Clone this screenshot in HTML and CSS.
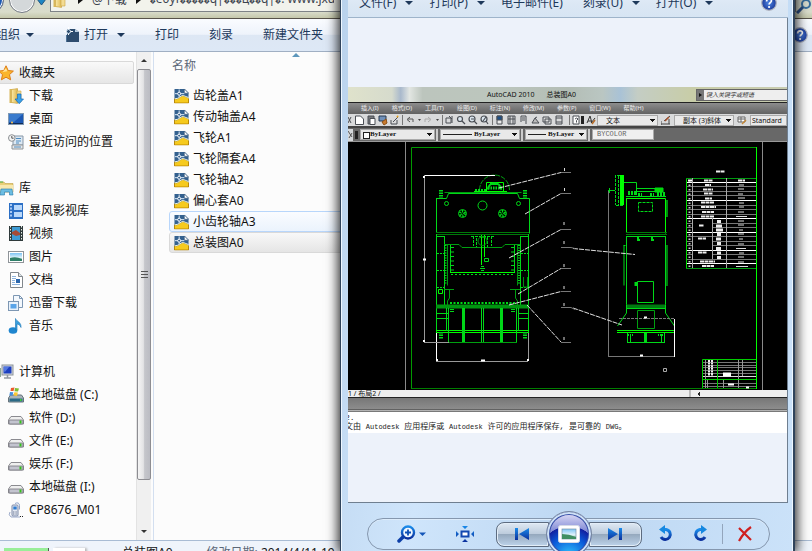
FILE: index.html
```html
<!DOCTYPE html>
<html lang="zh-CN">
<head>
<meta charset="utf-8">
<title>总装图A0</title>
<link rel="stylesheet" href="styles.css">
</head>
<body>
<svg class="defs" aria-hidden="true">
  <defs>
    <linearGradient id="blue" x1="0" y1="0" x2="0" y2="1"><stop offset="0" stop-color="#1a8bea"/><stop offset="1" stop-color="#0b2f9c"/></linearGradient>
    <linearGradient id="gold" x1="0" y1="0" x2="1" y2="0"><stop offset="0" stop-color="#fbeaa8"/><stop offset="1" stop-color="#dcb650"/></linearGradient>
    <linearGradient id="sky" x1="0" y1="0" x2="0" y2="1"><stop offset="0" stop-color="#7cc4f4"/><stop offset=".6" stop-color="#e4f4fb"/><stop offset="1" stop-color="#2f8f62"/></linearGradient>
    <radialGradient id="help"><stop offset="0" stop-color="#4f86e4"/><stop offset="1" stop-color="#1b3a9a"/></radialGradient>
  </defs>
  <symbol id="i-dwg" viewBox="0 0 16 16">
    <path d="M.5.5h11l4 4v11H.5z" fill="#34618f"/><path d="M1 11.500c5 0 6-4 9-3.500 2 .5 3 1.500 5.500 2v5.500H1z" fill="#f6ca1e"/><path d="M1 11c5 0 6-4 9-3.500 2 .5 3 1.500 5.500 2" stroke="#fffbe0" fill="none"/><path d="M11 .5l4.500 4.500H11z" fill="#fff" stroke="#2c4d70" stroke-width=".6"/>
    <path d="M5.500 1v8M1 5.500h10" stroke="#e4f2ff" fill="none"/><circle cx="5.500" cy="5.500" r="1.600" fill="#34618f" stroke="#fff"/><path d="M.5 11v4.500h15V11" fill="none" stroke="#b98400"/>
  </symbol>
  <symbol id="i-drive" viewBox="0 0 16 16">
    <path d="M3 6.500h10l2.500 3.500v4h-15v-4z" fill="#efefef" stroke="#8b8b90"/><rect x="1" y="10" width="14" height="4" rx="1" fill="#c3c4cf" stroke="#77777f" stroke-width=".8"/><rect x="11.500" y="10.500" width="2" height="3" fill="#35c21b"/>
  </symbol>
  <symbol id="i-help" viewBox="0 0 16 16">
    <circle cx="8" cy="8" r="7.300" fill="url(#help)" stroke="#b0b4c0" stroke-width="1.200"/><path d="M5.600 6.400c0-3.400 5-3.300 4.800-.4-.1 1.600-2.300 1.700-2.300 3.600" fill="none" stroke="#fff" stroke-width="1.700"/><circle cx="8.100" cy="12" r="1.100" fill="#fff"/>
  </symbol>
  <symbol id="i-folder" viewBox="0 0 16 16">
    <path d="M1.500 1h8v14h-8z" fill="#d8b75a"/><path d="M3.500 1.500l6-1v15l-6-1z" fill="url(#gold)" stroke="#c9a445" stroke-width=".6"/><path d="M9 3h4v11H9z" fill="#f3dc92" stroke="#c9a445" stroke-width=".6"/>
  </symbol>
</svg>

<div class="desktop">
  <div class="explorer">
    <header class="address">
      <button class="nav-orb back" aria-label="后退"></button>
      <button class="nav-orb forward" aria-label="前进"></button>
      <svg class="history" viewBox="0 0 9 6"><path d="M0 0h9L4.500 6z" fill="#1c86c4" stroke="#20567f"/></svg>
      <div class="crumbs">
        <svg class="icon16" viewBox="0 0 16 16"><use href="#i-folder"/></svg>
        <span class="tri-right"></span><a href="#">@下载</a>
        <span class="tri-right"></span><a href="#"><s>�</s>e0yf<s>�����</s>q|<s>���</s>ц<s>��</s>q|<s>�</s>: www.jxdn</a>
      </div>
      <svg class="search" viewBox="0 0 16 16"><circle cx="10" cy="6" r="4" fill="none" stroke="#3a6f9e" stroke-width="2"/><path d="M7 9l-6 6" stroke="#2c4f86" stroke-width="3"/></svg>
    </header>

    <nav class="toolbar" aria-label="命令栏">
      <button class="org">组织<span class="tri-down"></span></button>
      <button class="open"><svg class="icon16" viewBox="0 0 16 16"><path d="M3 2h8l4 3v10H3z" fill="#2d4c6e"/><path d="M11 2v3h4z" fill="#b9cfe4"/><path d="M0 4.500h9M4.500 0v8" stroke="#fff"/><circle cx="4.500" cy="4.500" r="2" fill="#2d4c6e" stroke="#dceaf6"/><path d="M2.500 8v7" stroke="#4e7296"/></svg>打开<span class="tri-down"></span></button>
      <button>打印</button><button>刻录</button><button>新建文件夹</button>
      <svg class="icon16 help" viewBox="0 0 16 16" role="img" aria-label="帮助"><use href="#i-help"/></svg>
    </nav>

    <div class="panes">
      <aside class="tree">
        <a class="head active" href="#"><svg class="icon16" viewBox="0 0 16 16"><path d="M8 .8l2.200 4.700 5.200.6-3.900 3.500 1.100 5.200L8 12.200l-4.600 2.600 1.100-5.200L.6 6.100l5.200-.6z" fill="#fbb52c" stroke="#dd7d16"/><path d="M8 3l1.300 3.300-4.800.7" fill="#ffe49a"/></svg>收藏夹</a>
        <a href="#"><svg class="icon16" viewBox="0 0 16 16"><use href="#i-folder"/><path d="M9.500 6h3.500v5h2.500l-4.300 4.700L7 11h2.500z" fill="#3aa2ea" stroke="#1668b4" stroke-width=".7"/></svg>下载</a>
        <a href="#"><svg class="icon16" viewBox="0 0 16 16"><rect x=".5" y="2.500" width="15" height="11" fill="#1c58b4" stroke="#7f98b3"/><path d="M1 3h14L6 11H1z" fill="#4f93de" opacity=".6"/><path d="M1 12.500h14" stroke="#112c55"/><circle cx="4" cy="11.500" r="1" fill="#ffc04d"/></svg>桌面</a>
        <a href="#"><svg class="icon16" viewBox="0 0 16 16"><path d="M5 2h10v9H5z" fill="#dce8f3" stroke="#8796a6"/><path d="M4 11h11v4H4z" fill="#e8e8e8" stroke="#8f9499"/><path d="M8 4.500h5M8 7h5M8 9h3M6 13h7" stroke="#4f8cc0"/><circle cx="3.800" cy="4" r="3.300" fill="#f5f5f5" stroke="#8b8f93"/><path d="M3.800 2v2.200h1.800" fill="none" stroke="#555"/></svg>最近访问的位置</a>
        <hr>
        <a class="head" href="#"><svg class="icon16" viewBox="0 0 16 16"><path d="M0 2h6l1 1.500h8V12H0z" fill="#e9cf78" stroke="#bf9d42" stroke-width=".6"/><path d="M0 5h15v7H0z" fill="#f7e8ae"/><path d="M1 2h4" stroke="#4ab54b"/><path d="M2 15l1-6h11l1 6h-3.500v-3h-5v3z" fill="#6cbde2" stroke="#2279ad" stroke-width=".6"/></svg>库</a>
        <a href="#"><svg class="icon16" viewBox="0 0 16 16"><rect x="1" width="14" height="16" fill="#2b6fc5"/><path d="M3 1v14" stroke="#d6e8ff" stroke-width="1.500" stroke-dasharray="2 1.500"/><path d="M6 2h8v5H6zM6 9h8v5H6z" fill="#b9d8fa"/></svg>暴风影视库</a>
        <a href="#"><svg class="icon16" viewBox="0 0 16 16"><rect x="1" width="14" height="15" fill="#2f3a3b"/><path d="M2.500 0v15M13.500 0v15" stroke="#e6efe9" stroke-dasharray="1.500 1.500"/><path d="M4 1h8v13H4z" fill="#3e9bd4"/><path d="M4 6l4-2 4 3v2l-4 1-4-2z" fill="#a74b35"/></svg>视频</a>
        <a href="#"><svg class="icon16" viewBox="0 0 16 16"><rect x=".5" y="2.500" width="15" height="11" fill="#fff" stroke="#8f9499"/><rect x="2" y="4" width="12" height="8" fill="url(#sky)"/><path d="M2 9q6-2 12 1v2H2z" fill="#2e7f68"/></svg>图片</a>
        <a href="#"><svg class="icon16" viewBox="0 0 16 16"><path d="M2.500.5h8l4 4v11h-12z" fill="#fff" stroke="#81878c"/><path d="M10.500.5v4h4" fill="#dde3e8" stroke="#81878c"/><path d="M4 4.500h4M4 6.500h4M4 8.500h3M4 10.500h3M4 12.500h8" stroke="#8eb4dd"/><path d="M8 7h4v4H8z" fill="#2a66ad"/></svg>文档</a>
        <a href="#"><svg class="icon16" viewBox="0 0 16 16"><path d="M5.500.5h6l3 3v9h-9z" fill="#f3f8fd" stroke="#7d97b3"/><path d="M11.500.5v3h3" fill="none" stroke="#7d97b3"/><rect x=".5" y="6.500" width="10" height="9" fill="#e9f2fb" stroke="#7d97b3"/><rect x="2.500" y="9" width="6" height="4.500" fill="#5aa4e8"/></svg>迅雷下载</a>
        <a href="#"><svg class="icon16" viewBox="0 0 16 16"><ellipse cx="5" cy="12.500" rx="4.300" ry="3.200" fill="#1f86cf"/><path d="M7.500 12V.5c1 3 6 3.500 5.500 9-1-3-3-3.300-4-3.500v6z" fill="#3ba0dd" stroke="#1673b5" stroke-width=".6"/></svg>音乐</a>
        <hr>
        <a class="head" href="#"><svg class="icon16" viewBox="0 0 16 16"><rect x="4" y="1" width="11" height="10" fill="#d6dade" stroke="#8a9299"/><rect x="5.500" y="2.500" width="8" height="7" fill="#1c3fc0"/><path d="M5.500 2.500h6l-5 6z" fill="#6c93f0" opacity=".7"/><path d="M6 14h7M9.500 11v3" stroke="#9299a0" stroke-width="1.500"/><path d="M0 4h3v9H0z" fill="#8aa894"/></svg>计算机</a>
        <a href="#"><svg class="icon16" viewBox="0 0 16 16"><path d="M2.500 8h11l2 3v4H.5v-4z" fill="#a9b3b9" stroke="#65727b"/><path d="M1.500 11.500h13v3h-13z" fill="#2b6a86"/><path d="M12 12h1.500v2H12z" fill="#3fd22c"/><path d="M3 1l3.500-.5L5.500 4 2.500 4z" fill="#ec5a2c"/><path d="M7 1l4 .5-1 3-3.500-.3z" fill="#7ebd33"/><path d="M2 5l3.300.2L4.500 8.500H1.300z" fill="#4490df"/><path d="M6.300 5.300l3.600.2L9 9l-3.500-.4z" fill="#fac832"/></svg>本地磁盘 (C:)</a>
        <a href="#"><svg class="icon16" viewBox="0 0 16 16"><use href="#i-drive"/></svg>软件 (D:)</a>
        <a href="#"><svg class="icon16" viewBox="0 0 16 16"><use href="#i-drive"/></svg>文件 (E:)</a>
        <a href="#"><svg class="icon16" viewBox="0 0 16 16"><use href="#i-drive"/></svg>娱乐 (F:)</a>
        <a href="#"><svg class="icon16" viewBox="0 0 16 16"><use href="#i-drive"/></svg>本地磁盘 (I:)</a>
        <a href="#"><svg class="icon16" viewBox="0 0 16 16"><path d="M7 1.500q4-2 4.500 2v4" fill="none" stroke="#8fa2c8"/><rect x="4" y="3" width="6" height="11" rx="1" fill="#e4e9f3" stroke="#7b88a6"/><rect x="5.300" y="4.500" width="3.400" height="3" fill="#2f7bd0"/><path d="M5 10h4M5 12h4" stroke="#6a7690" stroke-dasharray="1 .6"/><path d="M2 10q-2 3 1 5h9" fill="none" stroke="#9aa8c8"/><path d="M12 14.500h3" stroke="#222" stroke-dasharray="1 1"/></svg>CP8676_M01</a>
      </aside>

      <div class="scrollbar" aria-hidden="true">
        <span class="arrow up"></span><span class="thumb"><i></i></span><span class="rest"></span><span class="arrow down"></span>
      </div>

      <main class="files">
        <span class="sort"></span>
        <div class="colhead">名称</div>
        <a href="#"><svg viewBox="0 0 16 16"><use href="#i-dwg"/></svg>齿轮盖A1</a>
        <a href="#"><svg viewBox="0 0 16 16"><use href="#i-dwg"/></svg>传动轴盖A4</a>
        <a href="#"><svg viewBox="0 0 16 16"><use href="#i-dwg"/></svg>飞轮A1</a>
        <a href="#"><svg viewBox="0 0 16 16"><use href="#i-dwg"/></svg>飞轮隔套A4</a>
        <a href="#"><svg viewBox="0 0 16 16"><use href="#i-dwg"/></svg>飞轮轴A2</a>
        <a href="#"><svg viewBox="0 0 16 16"><use href="#i-dwg"/></svg>偏心套A0</a>
        <a class="hover" href="#"><svg viewBox="0 0 16 16"><use href="#i-dwg"/></svg>小齿轮轴A3</a>
        <a class="selected" href="#"><svg viewBox="0 0 16 16"><use href="#i-dwg"/></svg>总装图A0</a>
      </main>
    </div>

    <footer class="details">
      <span class="preview"><i></i><i></i></span>
      <span class="name">总装图A0</span>
      <span class="meta">修改日期: <b>2014/4/11 19</b></span>
    </footer>
  </div>

  <section class="viewer" aria-label="照片查看器">
    <nav class="vbar" aria-label="菜单">
      <button>文件(F)<span class="tri-down"></span></button>
      <button>打印(P)<span class="tri-down"></span></button>
      <button class="mail">电子邮件(E)</button>
      <button>刻录(U)<span class="tri-down"></span></button>
      <button>打开(O)<span class="tri-down"></span></button>
      <svg class="icon16 help" viewBox="0 0 16 16" role="img" aria-label="帮助"><use href="#i-help"/></svg>
    </nav>

    <div class="stage">
      <div class="cad">
        <div class="ctitle">
          <span class="cname">AutoCAD 2010</span><span class="cfile">总装图A0</span>
          <div class="cfind"><span class="tri-right"></span><input aria-label="搜索" placeholder="键入关键字或短语"></div>
        </div>
        <div class="cmenu"><span>插入(I)</span><span>格式(O)</span><span>工具(T)</span><span>绘图(D)</span><span>标注(N)</span><span>修改(M)</span><span>参数(P)</span><span>窗口(W)</span><span>帮助(H)</span></div>
        <div class="ctools">
          <svg class="cicons" viewBox="0 0 232 12" fill="none" stroke="#4a4e54">
            <path d="M0 3l3 6M3 3L0 9"/><path d="M7.500 2h5l3 3v5.500h-8z" fill="#fff"/><path d="M20 2h6v8h-6z" fill="#77797c"/><path d="M22 4.500h5v6h-5z" fill="#fff"/><path d="M31 2h7v5h-7z" stroke="#26384f" fill="#7090b8"/><path d="M34 8l4-3 1 4-3 2z" fill="#c87a2d" stroke="#8a5018"/><path d="M43 6v4h6V6M45 8l5-5" /><path d="M49 2l1 1" stroke="#eaa41c" stroke-width="2"/>
            <path d="M54.500 1v10M94.500 1v10M144.500 1v10M221.500 1v10" stroke="#777"/><path d="M65 8V5h-5M62 3l-3 2.500 3 2.500" stroke="#555"/><path d="M70 5h3l-1.500 2zM88 5h3l-1.500 2z" fill="#444" stroke="none"/><path d="M77 8V5h5M80 3l3 2.500L80 8" stroke="#aaa"/>
            <path d="M98 4h5v5h-5zM101 2l3 3M104 2v7" /><g stroke-width="1.200"><circle cx="112" cy="5" r="2.500" fill="#dbe6ef"/><path d="M114 7l3 3"/><circle cx="124" cy="5" r="3" fill="#dbe6ef"/><path d="M126 7l3 3M123 5h3"/><circle cx="136" cy="5" r="3" fill="#dbe6ef"/><path d="M138 7l2 3M135 7l3-4"/></g>
            <path d="M149 2h5v8h-5z" fill="#e9e9e9"/><path d="M149 2h5v4h-5z" fill="#1d4f86"/><path d="M160 2h7v8h-7zM162 2v8M165 2v8M160 5h7"/><path d="M173 2h5v8M174 4h3M174 6h3M173 2v6"/><path d="M184 9l3-5 4 5zM187 4l2-1" fill="#bbb"/><path d="M195 3h6v5h-6zM197 5h6v5h-6z" fill="#ddd"/><path d="M208 2h6v8h-6zM208 4h6M208 8h6"/><path d="M225 2h6v8h-6z" fill="#fff"/><path d="M227 5q2-2 3 0l-1.500 1.500v2"/>
          </svg>
          <i class="bar"></i>
          <svg class="ci" viewBox="0 0 10 10"><path d="M1 8l3-7 2 7M2 6h3M5 8l4-5" fill="none" stroke="#333"/><path d="M6 9l3-4" stroke="#b86c28" stroke-width="1.500"/></svg>
          <select class="s1" aria-label="文字样式"><option>文本</option></select>
          <svg class="ci" viewBox="0 0 10 10"><path d="M0 9h9M0 6v4M3 6l6-5M8 4v5" fill="none" stroke="#444"/><path d="M4 6l4-4" stroke="#a5502a" stroke-width="1.500"/></svg>
          <select class="s2" aria-label="标注样式"><option>副本 (3)斜体</option></select>
          <svg class="ci" viewBox="0 0 10 10"><path d="M1 2h7v5H1zM1 4h7M4 2v5" fill="#fff" stroke="#666"/><path d="M5 9l4-4" stroke="#c68734" stroke-width="1.500"/></svg>
          <select class="s3" aria-label="表格样式"><option>Standard</option></select>
        </div>
        <div class="cprops">
          <svg class="cj" viewBox="0 0 6 12"><path d="M0 0h5v12H0z" fill="#d5d8db"/><path d="M0 2l4 6M1 9l3-5" stroke="#555"/></svg>
          <i class="bar"></i>
          <label class="swatch"><select class="p1" aria-label="颜色"><option>ByLayer</option></select></label>
          <i class="grip"></i><select class="p2 line" aria-label="线型"><option>ByLayer</option></select>
          <i class="grip"></i><select class="p3 line" aria-label="线宽"><option>ByLayer</option></select>
          <i class="grip"></i><select class="p4" aria-label="打印样式" disabled><option>BYCOLOR</option></select>
        </div>
        <svg class="drawing" viewBox="348 142 439 248" preserveAspectRatio="none" role="img" aria-label="压力机总装图">
          <g fill="none" stroke-width="1">
            <path d="M405.500 142v248M762.500 142v248" stroke="#8a8a8a"/><path d="M411.500 389V147.500H756.500" stroke="#009a00"/><path d="M411.500 388.500H756" stroke="#007d00"/><path d="M756.500 147v242" stroke="#0f0"/>
            <!-- front view -->
            <g stroke="#00d818">
              <path d="M436.500 198.500h10l2-5h69l2 5h10v35M436.500 198v35" /><path d="M436 232.500h93M436 234.500h93" stroke="#007a0a"/><path d="M444.500 192.500h77" stroke="#009a10"/>
              <path d="M436.500 234v98M528.500 234v98M444.500 236.500v71M520.500 236.500v71M436 236.500h9M520 236.500h9"/>
              <path d="M447.500 244.500v41M517.500 244.500v41" stroke="#009510"/><path d="M445.500 245v40M519 245v40" stroke-width="2" stroke-dasharray="1 1.500"/><path d="M450.500 244v29M514.500 244v29"/><path d="M452.500 247v24M512.500 247v24" stroke-width="3" stroke-dasharray="1 3.500"/>
              <path d="M444 244.500h15l3 3h40l3-3h15" stroke="#00a010"/><path d="M450 272.500h65" stroke="#0f0"/><path d="M451 274.500h63" stroke-dasharray="2 2"/>
              <path d="M471 236.500h24M473.500 236v10M476.500 238v9M487.500 237v10M491.500 236v10" stroke-dasharray="3 1"/><path d="M481.500 235v30M484.500 235v22M480 237h6" stroke="#0f0"/><circle cx="482.500" cy="241" r="4.500" stroke="#008a10"/><path d="M484.500 258.500h4v3h-4zM480 268.500h5" /><path d="M482.500 266v7" stroke-width="3" stroke-dasharray="1 1"/>
              <path d="M444 289.500h10M449.500 290v8l-2 3v5M510 289.500h10M515.500 290v8l2 3v5" stroke="#00a010"/><path d="M450 303h66" stroke-dasharray="2 1.500" stroke-width="2"/><path d="M438.500 289.500h4v4h-4z" stroke="#0f0"/><path d="M437 253.500h7M521 253.500h7M437 270.500h7M521 270.500h7M437 287.500h7M521 287.500h7" stroke-dasharray="2 1"/><path d="M523.500 277v10h4v-10" stroke="#008a10"/>
              <path d="M436 305.500h93M436 307.500h93" stroke="#009510" stroke-width="2"/><path d="M436 330.500h93M436 332.500h93" stroke="#0f0"/><path d="M448.500 308v34M516.500 308v34M446.500 308v23M518.500 308v23"/><path d="M463.500 308v34M501.500 308v34" stroke-width="3"/><path d="M481.500 308v34M483.500 308v34"/><path d="M448 342.500h69" stroke="#00a010"/><path d="M436 313.500h12M518 313.500h11M436 318.500h12M518 318.500h11"/><path d="M452 309v4M513 309v4" stroke-width="4" stroke-dasharray="1 1"/>
              <path d="M441 190v8M525 190v8M441 332v7M525 332v7" stroke-width="4" stroke-dasharray="1.500 1"/><circle cx="446.500" cy="203.500" r="2"/><circle cx="518.500" cy="203.500" r="2"/><circle cx="482.500" cy="205.500" r="4.500"/><circle cx="462.500" cy="213.500" r="4"/><circle cx="462.500" cy="213.500" r="2" stroke-dasharray="1 1" stroke-width="3"/><circle cx="502.500" cy="213.500" r="4"/><circle cx="502.500" cy="213.500" r="2" stroke-dasharray="1 1" stroke-width="3"/>
              <path d="M479.500 190a15 15 0 0 1 30 0" stroke="#00a010" stroke-dasharray="5 1"/><path d="M486.500 191v-8.500h17V191M474 191.500h33" stroke="#0f0"/><path d="M488 189.500a5 5 0 0 1 13 0M490 184h8" stroke-width="2"/><path d="M488 188h14" stroke-width="3" stroke-dasharray="1.500 1"/><path d="M475 190h11" stroke-dasharray="2 1" stroke-width="2"/>
            </g>
            <!-- side view -->
            <g stroke="#00d818">
              <path d="M615.500 175v30M617 175.500h7M616 205.500h8M618.500 176v29" stroke-dasharray="3 1"/><path d="M622 175v30" stroke="#0f0" stroke-width="4"/><path d="M608 190.500h7M609.500 188v5M624 182.500h12.500V195M636 188.500h20M636 191.500h20"/><path d="M655 188h8v4h-8z" fill="#0d0"/><path d="M626 196.500h40" /><path d="M628 193h8M638 195h4M650 195h4M657 194h8" stroke-width="4" stroke-dasharray="2 1"/>
              <path d="M626.500 198.500h39v35M626.500 198v35" stroke="#0f0"/><path d="M626 232.500h41M626 234.500h41" stroke="#007a0a"/><path d="M638.500 202.500h14v9h-14z" stroke-dasharray="3 1"/><path d="M667 200v17" stroke-width="2" stroke="#008a10"/><path d="M626 236.500h40M626.500 236v69M665.500 236v69M624 245.500v40M623.500 245.500h2" /><path d="M667 245v41" stroke="#007a10" stroke-width="2"/><path d="M638 237v3h2M652 237v3h2" stroke-width="2"/>
              <path d="M637.500 281.500h16v21h-16z"/><path d="M636 282v4" stroke-width="3"/><path d="M626 306.500h40" stroke="#007a10" stroke-width="4"/><path d="M626 308.500h40M626.500 305v8l-9 13M665.500 305v8l9 13"/><path d="M637.500 310.500h17v18h-17z" stroke="#00a010"/><path d="M617 330.500h57M617 332.500h57" stroke="#0f0"/><path d="M627.500 333v9M664.500 333v9M627 342.500h38M630.500 334v8M661.500 334v8"/><path d="M645.500 333v9" stroke-width="3"/><path d="M628 335h5M658 335h6" stroke-width="2" stroke-dasharray="1 1"/>
            </g>
            <!-- dimensions -->
            <path d="M424 175.500h71M436.500 333v28M674.500 319v38" stroke="#fff"/><path d="M424.500 175v167M424 342.500h25M436 361.500h92M528.500 333v28" stroke="#999"/><path d="M608.500 191v166M608 356.500h66" stroke="#777"/><path d="M619 318.500h55" stroke="#777" stroke-dasharray="3 1"/>
            <path d="M423 259.500h3M481 360.500h4M640 355.500h3M644 317.500h3M423 177h2M423 341h2M436 360h2M527 360h2" stroke="#fff" stroke-width="2"/>
            <path d="M499 188l62-15.500M525 214l36-20.500M509 258l52-28.500M518 294l43-25.500M509 305l52-13.500M527 305l34 37M573 248.500l62 6M573 308l49 17" stroke="#e0e0e0" stroke-dasharray="5 1"/><path d="M561 172.500h10M561 193.500h10M561 229.500h10M561 247.500h10l4 1M561 268.500h10M561 291.500h10M561 307.500h10l4 2M561 342.500h10" stroke="#777"/>
            <path d="M564.500 168v3M564.500 188v3M564 222v3M564 241v3M564 264v3M564 286v3M564 303v3M564 337v3" stroke="#ddd" stroke-width="1"/><path d="M663.500 368.500h3v3h-3z" stroke="#aaa"/>
            <!-- parameter table -->
            <path d="M686.500 178v90" stroke="#0d0"/><path d="M686 178.500h70M686 268.500h70" stroke="#009a10"/>
            <path d="M687 182.500h69M687 200.500h69M687 218.500h69M687 232.500h69M687 250.500h69M687 263.500h69" stroke="#fff"/><path d="M687 186.500h69M687 191.500h69M687 195.500h69M687 205.500h69M687 209.500h69M687 214.500h69M687 223.500h6M713 223.500h43M687 227.500h6M713 227.500h43M687 236.500h69M687 241.500h6M713 241.500h43M687 245.500h6M713 245.500h43M687 254.500h6M713 254.500h43M687 259.500h69" stroke="#777"/><path d="M692.500 178v90M726.500 178v90M712.500 218v41" stroke="#aaa"/>
            <g stroke="#eee" stroke-width="2"><path d="M716 171.500h9M704 180.500h9M738 180.500h7M705 185h6M703 189.500h10M704 193.500h9M705 198.500h7M701 202.500h13M701 207h15M702 212h12M701 216.500h13M699 225.500h5M698 238.500h8M698 252.500h9M700 261.500h15M702 266h12" stroke-dasharray="4 .5"/><path d="M717 221.500h4M716 226h6M716 230h7M717 234.500h4M716 239h5M717 243.500h4M716 248.500h5M717 253h4M717 257.500h4" stroke-width="3"/></g>
            <path d="M739 185h5M738 189h6M738 194h5M738 198h7M739 203h5M739 207h5M738 212h6M736 216.500h11M738 221h6M738 225h6M739 230h4M738 234h6M739 239h4M738 244h6M736 248.500h10M739 253h5M738 257h6M738 262h6M736 266.500h12" stroke="#ddd"/><path d="M689.500 180v87" stroke="#ccc" stroke-width="2" stroke-dasharray="1.500 3"/><path d="M688 180.500h4" stroke="#fff" stroke-width="2"/>
            <!-- title block -->
            <path d="M703 362.500h53M703 365.500h53M703 367.500h53M703 370.500h53M703 373.500h53M703 383.500h53M703 386.500h53" stroke="#777"/><path d="M703 376.500h53" stroke="#ddd"/><path d="M709 360v16M712 360v16" stroke="#eee" stroke-width="2" stroke-dasharray="2 .6"/><path d="M705.500 360v28M738.500 360v28M742.500 360v16M723.500 380v8M707.500 380v8" stroke="#999"/><path d="M702.500 388v-28.500H756M717.500 360v28M702 379.500h54" stroke="#0c0"/><path d="M723 374.500h8" stroke="#fff" stroke-width="4"/><path d="M728 384.500h6M746 387.500h3" stroke="#fff" stroke-width="2"/>
          </g>
        </svg>
        <div class="ctabs"><span>1 / 布局2 /</span><i></i></div>
        <div class="cgap"></div>
        <div class="ccmd"><p>2.</p><p>文由 <span>Autodesk</span> 应用程序或 <span>Autodesk</span> 许可的应用程序保存, 是可靠的 <span>DWG</span>。</p></div>
      </div>
    </div>

    <div class="controls">
      <div class="pill">
        <button class="zoom" aria-label="缩放"><svg width="30" height="18" viewBox="0 0 30 18"><circle cx="11" cy="7.500" r="6" fill="#eef6ff" stroke="url(#blue)" stroke-width="2.400"/><path d="M6 12l-4 4" stroke="#0d3fa8" stroke-width="3.500" stroke-linecap="round"/><path d="M11 4.500v6M8 7.500h6" stroke="#0d4fb4" stroke-width="1.800"/><path d="M22 7.500h7L25.500 11z" fill="#1456b8"/></svg></button>
        <button class="fit" aria-label="实际大小"><svg width="18" height="16" viewBox="0 0 18 16"><rect x="5.500" y="5.500" width="7" height="5" fill="#fff" stroke="#1248b0" stroke-width="2"/><path d="M6 0h6L9 3zM6 16h6l-3-3zM0 5v6l3-3zM18 5v6l-3-3z" fill="url(#blue)"/></svg></button>
        <button class="step prev" aria-label="上一个"><svg width="16" height="12" viewBox="0 0 16 12"><path d="M1 0h3v12H1zM15 0v12L5 6z" fill="url(#blue)"/></svg></button>
        <button class="play" aria-label="放映幻灯片"><svg width="22" height="18" viewBox="0 0 22 18"><rect x=".5" y=".5" width="21" height="17" rx="2" fill="#fff" stroke="#d5d9e6"/><rect x="4" y="4" width="14" height="10" fill="url(#sky)" stroke="#7993a8" stroke-width=".7"/><path d="M4 9q7 0 14 3v2H4z" fill="#3f8f62"/></svg></button>
        <button class="step next" aria-label="下一个"><svg width="16" height="12" viewBox="0 0 16 12"><path d="M12 0h3v12h-3zM1 0v12l10-6z" fill="url(#blue)"/></svg></button>
        <button class="turn" aria-label="逆时针旋转"><svg width="16" height="18" viewBox="0 0 16 18"><path d="M5 4.500h3a5 5 0 1 1-5 7.500" fill="none" stroke="url(#blue)" stroke-width="3"/><path d="M7 0v9L1 4.500z" fill="#1688e0"/></svg></button>
        <button class="turn cw" aria-label="顺时针旋转"><svg width="16" height="18" viewBox="0 0 16 18"><path d="M11 4.500H8a5 5 0 1 0 5 7.500" fill="none" stroke="url(#blue)" stroke-width="3"/><path d="M9 0v9l6-4.500z" fill="#1688e0"/></svg></button>
        <i class="sep"></i>
        <button class="del" aria-label="删除"><svg width="16" height="16" viewBox="0 0 16 16"><path d="M2 2l12 12M14 1Q7 6 2 15" fill="none" stroke="#cf2020" stroke-width="2.200"/></svg></button>
      </div>
    </div>
  </section>
</div>
</body>
</html>
```

FILE: styles.css
```css
* { box-sizing: border-box; }
html, body { height: 100%; }
body { margin: 0; overflow: hidden; font: 12px/16px "Noto Sans", "Noto Sans CJK SC", sans-serif; color: #111; }
button { font: inherit; color: inherit; background: none; border: 0; padding: 0; display: flex; align-items: center; }
a { color: inherit; text-decoration: none; }
svg { display: block; flex: none; }
.defs { position: absolute; width: 0; height: 0; }
.icon16 { width: 16px; height: 16px; }
.desktop { position: relative; height: 100%; overflow: hidden; }
.tri-down { border: 4px solid transparent; border-top-color: #1e395b; border-bottom: 0; margin-left: 9px; }
.tri-right { border: 4px solid transparent; border-left: 5px solid #111; border-right: 0; }

/* Explorer window; its top edge and lower edge run off the screen */
.explorer { position: absolute; inset: -12px 0 -24px; display: flex; flex-direction: column; background: #fcfcfc; }
.address { display: flex; align-items: center; height: 31px; flex: none; padding-bottom: 7px; overflow: hidden; border-bottom: 1px solid #58534b; background: linear-gradient(#cfd5d0, #d9dccb 80%, #c5c8ab); color: #3e4550; }
.nav-orb { flex: none; width: 26px; height: 26px; border-radius: 50%; border: 1px solid #747a84; background: #d4d8da; box-shadow: inset 0 0 0 1px #fff; }
.nav-orb.back { margin-left: -22px; background: #1c5ab4; }
.nav-orb.forward { margin-left: 5px; }
.history { width: 9px; height: 6px; margin: 4px 0 0 2px; }
.crumbs { flex: 1; display: flex; align-items: center; gap: 9px; height: 24px; margin-left: 4px; white-space: nowrap; overflow: hidden; border: 1px solid #7e8387; background: #f2f3ec; }
.crumbs .icon16 { height: 20px; margin: 0 1px; }
.crumbs a:last-child { max-width: 184px; overflow: hidden; }
.crumbs s { font-size: 6px; text-decoration: none; }
.search { width: 16px; height: 16px; margin-top: 12px; }
.toolbar { display: flex; align-items: center; height: 33px; flex: none; border-bottom: 1px solid #a0afc3; background: linear-gradient(#fafcff, #eef3fb 48%, #dde7f4 50%, #dde8f6); color: #1e395b; }
.toolbar button { margin-right: 30px; }
.toolbar .org { margin-left: -4px; }
.toolbar .org .tri-down { margin-left: 6px; }
.toolbar .open .icon16 { margin-right: 4px; }
.toolbar .help { margin-left: auto; margin-right: 4px; }
.panes { flex: 1; min-height: 0; display: flex; }
.tree { width: 136px; padding-top: 9px; overflow: hidden; flex: none; }
.tree a { display: flex; align-items: center; gap: 5px; height: 23px; padding-left: 8px; white-space: nowrap; }
.tree .head { padding-left: 0; margin-left: -2px; }
.tree .active { margin: 0 2px 0 -3px; border: 1px solid #d9d9d9; border-radius: 2px; background: linear-gradient(#f9f9f9, #e6e6e6); }
.tree hr { height: 23px; margin: 0; border: 0; }
.scrollbar { width: 15px; flex: none; display: flex; flex-direction: column; background: #f0f0f0; border-left: 1px solid #e3e3e3; }
.arrow { height: 17px; display: grid; place-items: center; }
.arrow::before { content: ""; border: 3px solid transparent; }
.up::before { border-bottom-color: #333; border-top: 0; }
.down::before { border-top-color: #333; border-bottom: 0; }
.thumb { flex: 410; display: grid; place-items: center; border: 1px solid #8d8d92; background: linear-gradient(90deg, #f5f5f5, #e3e3e5 45%, #c5c6cb 55%, #bbbcc3); border-radius: 2px; }
.thumb i { width: 7px; height: 8px; background: repeating-linear-gradient(#555 0 1px, transparent 1px 3px); }
.rest { flex: 43; }
.files { position: relative; flex: 1; margin-left: 2px; border-left: 1px solid #d3dff0; padding: 5px 0 0 15px; }
.sort { position: absolute; left: 138px; top: 1px; border: 4px solid transparent; border-bottom-color: #5d96bb; border-top: 0; }
.colhead { height: 28px; padding: 1px 0 0 3px; color: #5c6878; }
.files a { display: flex; align-items: center; gap: 4px; height: 21px; padding-left: 4px; border: 1px solid transparent; border-radius: 3px; }
.files svg { width: 15px; height: 16px; }
.files .hover { border-color: #b8d6fb; background: linear-gradient(#fafcff, #ebf3fd); }
.files .selected { border-color: #d9d9d9; background: linear-gradient(#f8f8f8, #e5e5e5); }
.files .hover, .files .selected { margin-right: 300px; }
.details { display: flex; flex: none; height: 35px; padding-top: 4px; border-top: 1px solid #a9bcd4; background: #eff4fb; white-space: nowrap; }
.preview { display: flex; gap: 4px; margin: 3px 37px 0 4px; }
.preview i { width: 45px; height: 24px; background: #98ee98; border-right: 1px solid #555; }
.preview i + i { width: 32px; background: #fff; border: 0; box-shadow: 2px 0 2px #bbb; }
.details .name { margin-right: 34px; }
.details .meta { color: #5c6878; }
.details b { font-weight: 400; color: #111; }

/* Photo viewer window floating above */
.viewer { position: absolute; inset: -14px 17px 0 340px; display: flex; flex-direction: column; padding: 0 5px 0 7px; border: solid #30445c; border-width: 0 2px 0 1px; background: linear-gradient(100deg, #b9d2ec, #cfe5fb 30%, #bdd7f2 60%, #cbe2f9); box-shadow: inset 1px 0 #eef7ff, inset -1px 0 #eef7ff, 0 0 11px 2px rgba(0,0,0,.85); }
.vbar { display: flex; align-items: center; height: 32px; flex: none; padding: 3px 11px 0; gap: 16px; background: linear-gradient(#e8f0fa, #dbe7f4 60%, #d7e5f3); border-bottom: 1px solid #9eb4ca; color: #1e395b; white-space: nowrap; }
.vbar .mail { margin-right: 4px; }
.vbar .help { margin-left: auto; }
.stage { flex: 1; min-height: 0; display: flex; flex-direction: column; justify-content: center; background: #edf2fa; border: solid #6f7f90; border-width: 0 1px 1px 0; }

.cad { overflow: hidden; white-space: nowrap; background: #6a6a6a; }
.ctitle { display: flex; align-items: center; height: 15px; font-size: 7px; line-height: 14px; background: linear-gradient(90deg, #dfe2cb, #d6dbcd 10%, #a9b9cc 12%, #e2e6e2 14%, #bcc5bd 17%, #bcc6bd 34%, #b3bdb5 50%, #bac6c2 58%, #a9c2d6 62%, #c4cdc4 66%, #c8cda8 78%, #c8ccb0); }
.cname { margin-left: 139px; }
.cfile { margin-left: 12px; }
.cfind { display: flex; align-items: center; margin-left: auto; width: 91px; height: 12px; background: #777; border: 1px solid #666; border-right: 0; }
.cfind .tri-right { border-width: 2px 0 2px 3px; margin: 0 2px; }
.cfind input { flex: 1; min-width: 0; height: 10px; padding: 0 2px; border: 0; font: italic 6px/10px "Noto Sans", "Noto Sans CJK SC", sans-serif; background: #eee; }
.cfind input::placeholder { color: #333; opacity: 1; }
.cmenu { display: flex; gap: 13px; height: 12px; padding-left: 13px; font-size: 6px; line-height: 11px; color: #eee; border-top: 1px solid #222; background: linear-gradient(#8d8d8d, #626262); }
.ctools { display: flex; align-items: center; height: 12px; background: #d9dadb; }
.cicons { width: 232px; height: 12px; }
.bar { width: 3px; height: 8px; margin: 0 2px 0 1px; background: #222; flex: none; }
.ci { width: 10px; height: 10px; margin-right: 1px; }
.ctools .ci ~ .ci { margin: 0 3px; }
.cad select { appearance: none; flex: none; height: 11px; margin: 0; padding: 0 8px; border: 1px solid #aaa; border-radius: 0; color: #111; opacity: 1; font: 7px/9px "Noto Sans", "Noto Sans CJK SC", sans-serif; background: conic-gradient(from 315deg at 50% 100%, #111 90deg, transparent 0) right 2px center / 5px 3px no-repeat, #e9e9e9; }
.cad .s1, .cad .s2, .cad .p1, .cad .p4 { background: conic-gradient(from 135deg at 50% 100%, transparent 0, transparent 0), linear-gradient(#111, #111) right 4px top 5px / 1px 1px no-repeat, linear-gradient(#111, #111) right 3px top 4px / 3px 1px no-repeat, linear-gradient(#111, #111) right 2px top 3px / 5px 1px no-repeat, #e9e9e9; }
.cad .s1 { width: 61px; }
.cad .s2 { width: 60px; }
.cad .s3 { flex: 1; min-width: 0; padding: 0 1px; background: #e9e9e9; }
.cprops { display: flex; align-items: center; height: 16px; border-top: 2px solid #444; border-bottom: 1px solid #999; background: #686868; }
.cad .cprops select { font-family: "Liberation Serif", serif; font-weight: 700; }
.cj { width: 6px; height: 12px; }
.swatch { position: relative; display: flex; }
.swatch::before { content: ""; position: absolute; left: 3px; top: 3px; width: 5px; height: 5px; border: 1px solid #222; background: #fff; }
.cad .p1 { width: 75px; padding-left: 9px; }
.cad .line { padding-left: 33px; background: linear-gradient(#111, #111) right 4px top 5px / 1px 1px no-repeat, linear-gradient(#111, #111) right 3px top 4px / 3px 1px no-repeat, linear-gradient(#111, #111) right 2px top 3px / 5px 1px no-repeat, linear-gradient(#222, #222) 2px center / 29px 1px no-repeat, #e9e9e9; }
.cad .p2 { width: 80px; }
.cad .p3 { width: 62px; padding-left: 22px; background-size: 1px 1px, 3px 1px, 5px 1px, 18px 1px; }
.cad .cprops .p4 { width: 62px; padding-left: 4px; color: #666; font-family: "Liberation Mono", monospace; font-weight: 400; background: #f0f0f0; }
.grip { width: 2px; height: 12px; margin: 0 2px 0 1px; background: #ccc; flex: none; }
.drawing { width: 100%; height: 248px; background: #000; }
.ctabs { display: flex; height: 8px; font-size: 7px; line-height: 8px; background: #eee; border-bottom: 1px solid #222; }
.ctabs i { margin-left: auto; width: 98px; border-left: 2px solid #bbb; background: conic-gradient(from 45deg at 0 50%, #222 90deg, transparent 0) 6px center / 3px 4px no-repeat; }
.cgap { height: 14px; background: linear-gradient(#777, #8d8d8d 80%, #555 81%, #bbb 90%, #555); }
.ccmd { height: 21px; padding-top: 1px; background: #fff; font: 8px/9px "Liberation Mono", "Noto Sans CJK SC", monospace; color: #222; }
.ccmd p { margin: 0 0 0 -3px; }
.ccmd span { font-size: 7px; }

.controls { flex: none; display: flex; justify-content: center; padding: 15px 0 1px; }
.pill { display: flex; align-items: center; height: 32px; padding: 0 16px 0 29px; border: 1px solid #8597ae; border-radius: 16px; box-shadow: inset 0 1px #ddecfb; }
.pill button { justify-content: center; }
.zoom { width: 30px; }
.fit { width: 18px; margin: 0 22px 0 29px; }
.step { width: 53px; height: 25px; border: 1px solid #5d6c80; background: linear-gradient(#dfe9f3, #bccbdc 48%, #96a9be 50%, #bdd3ea); box-shadow: inset 0 0 0 1px #e3eef8; }
.prev { border-radius: 8px 0 0 8px; }
.next { border-radius: 0 8px 8px 0; }
.play { position: relative; width: 46px; height: 46px; margin: 0 -3px; border: 1px solid #7585a0; border-radius: 50%; background: radial-gradient(circle at 50% 100%, #30c8ff, #0a58d8 40%, #1220a0 60%, transparent 61%), linear-gradient(#e5e2f8, #5a68c8 60%); box-shadow: inset 0 0 0 2px #cfe2f6, inset 0 0 0 3px #384fa8; }
.turn { width: 16px; margin-left: 16px; }
.cw { margin-left: 18px; }
.sep { width: 1px; height: 20px; margin: 0 14px; background: #93a5bc; }
```
